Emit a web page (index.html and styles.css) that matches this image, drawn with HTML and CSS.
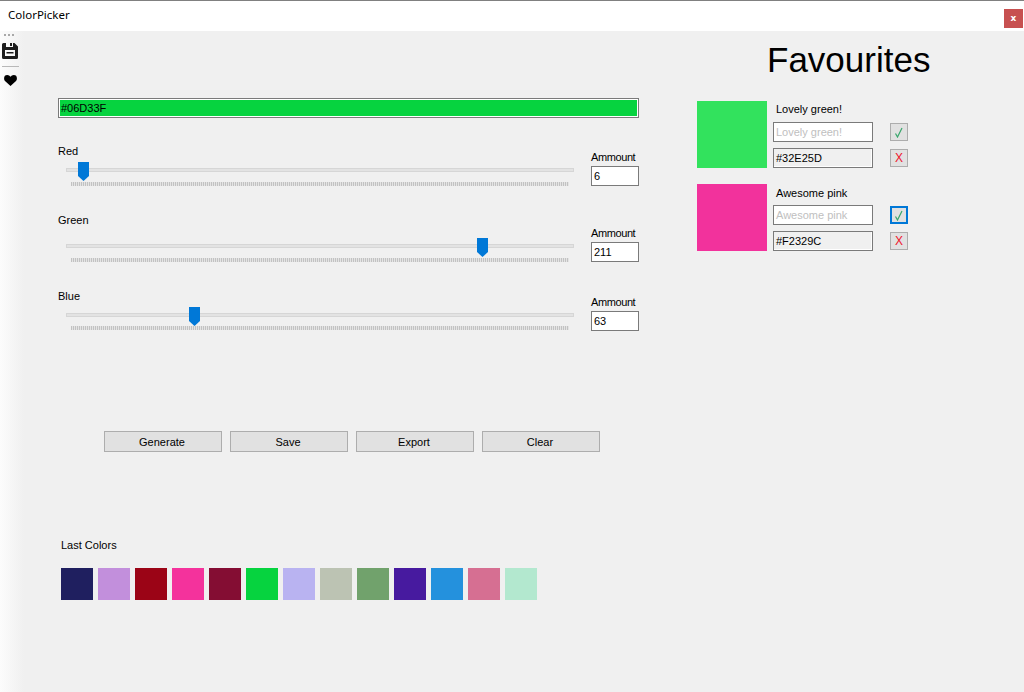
FILE: index.html
```html
<!DOCTYPE html>
<html lang="en">
<head>
<title>ColorPicker</title>
<meta charset="UTF-8">
<link rel="stylesheet" href="styles.css">
</head>
<body>
<header class="titlebar">
  <span class="title">ColorPicker</span>
  <button class="close">x</button>
</header>

<div class="app">
  <nav class="toolbar">
    <div class="grip"><i></i><i></i><i></i></div>
    <svg class="tool-save" width="16" height="16" viewBox="0 0 16 16">
      <path fill="#1c1c1c" fill-rule="evenodd" d="M1.500 0H12.500L16 3.500V14.500Q16 16 14.500 16H1.500Q0 16 0 14.500V1.500Q0 0 1.500 0ZM4 0V4H11V0ZM3 7V13H13V7ZM4.500 9H11.500V10.500H4.500Z"/>
      <path fill="#1c1c1c" d="M8 0H10V3H8Z"/>
    </svg>
    <hr class="tool-sep">
    <svg class="tool-heart" width="13" height="11" viewBox="0 0 14 12">
      <path fill="#000" d="M7 12L1 6.500Q0 5.500 0 3.700Q0 0 3.500 0Q5.800 0 7 2Q8.200 0 10.500 0Q14 0 14 3.700Q14 5.500 13 6.500Z"/>
    </svg>
  </nav>

  <main class="picker">
    <div class="color-bar"><span class="color-fill">#06D33F</span></div>

    <section class="slider-row row-red">
      <div class="slider">
        <label class="slider-label">Red</label>
        <div class="track"><span class="thumb" style="left: 11px"></span></div>
        <div class="ticks"></div>
      </div>
      <div class="amount">
        <label>Ammount</label>
        <div class="field amount-box">6</div>
      </div>
    </section>

    <section class="slider-row row-green">
      <div class="slider">
        <label class="slider-label">Green</label>
        <div class="track"><span class="thumb" style="left: 410px"></span></div>
        <div class="ticks"></div>
      </div>
      <div class="amount">
        <label>Ammount</label>
        <div class="field amount-box">211</div>
      </div>
    </section>

    <section class="slider-row row-blue">
      <div class="slider">
        <label class="slider-label">Blue</label>
        <div class="track"><span class="thumb" style="left: 122px"></span></div>
        <div class="ticks"></div>
      </div>
      <div class="amount">
        <label>Ammount</label>
        <div class="field amount-box">63</div>
      </div>
    </section>

    <div class="actions">
      <button class="action">Generate</button>
      <button class="action">Save</button>
      <button class="action">Export</button>
      <button class="action">Clear</button>
    </div>

    <section class="last-colors">
      <label class="last-label">Last Colors</label>
      <div class="swatches">
        <span class="swatch c1"></span>
        <span class="swatch c2"></span>
        <span class="swatch c3"></span>
        <span class="swatch c4"></span>
        <span class="swatch c5"></span>
        <span class="swatch c6"></span>
        <span class="swatch c7"></span>
        <span class="swatch c8"></span>
        <span class="swatch c9"></span>
        <span class="swatch c10"></span>
        <span class="swatch c11"></span>
        <span class="swatch c12"></span>
        <span class="swatch c13"></span>
      </div>
    </section>
  </main>

  <aside class="favourites">
    <h1>Favourites</h1>

    <article class="fav">
      <div class="fav-color fav-green"></div>
      <div class="fav-fields">
        <label class="fav-name">Lovely green!</label>
        <div class="field fav-box placeholder">Lovely green!</div>
        <div class="field fav-box hex">#32E25D</div>
      </div>
      <div class="fav-buttons">
        <button class="mini">
          <svg width="10" height="11" viewBox="0 0 10 11"><path fill="none" stroke="#3aa76d" stroke-width="1.200" d="M1.500 6.500L3.500 10L8 1"/></svg>
        </button>
        <button class="mini del">X</button>
      </div>
    </article>

    <article class="fav">
      <div class="fav-color fav-pink"></div>
      <div class="fav-fields">
        <label class="fav-name lower">Awesome pink</label>
        <div class="field fav-box placeholder">Awesome pink</div>
        <div class="field fav-box hex">#F2329C</div>
      </div>
      <div class="fav-buttons">
        <button class="mini focused">
          <svg width="10" height="11" viewBox="0 0 10 11"><path fill="none" stroke="#3aa76d" stroke-width="1.200" d="M1.500 6.500L3.500 10L8 1"/></svg>
        </button>
        <button class="mini del">X</button>
      </div>
    </article>
  </aside>
</div>
</body>
</html>
```

FILE: styles.css
```css
* {
    box-sizing: border-box;
}
html, body {
    margin: 0;
    height: 100%;
    overflow: hidden;
}
body {
    display: flex;
    flex-direction: column;
    background-color: #f0f0f0;
    color: #000;
    font-family: "Liberation Sans", sans-serif;
    font-size: 11px;
    line-height: 16px;
}
button {
    font: inherit;
    color: inherit;
    padding: 0;
}
label {
    display: block;
}

/* title bar */
.titlebar {
    flex: none;
    display: flex;
    align-items: center;
    justify-content: space-between;
    height: 31px;
    padding: 0 1px 0 8px;
    background-color: #fff;
    border-top: 1px solid #808080;
}
.title {
    font-family: "Noto Sans", sans-serif;
    font-size: 11.5px;
    margin-top: -2px;
}
.close {
    width: 19px;
    height: 19px;
    margin-top: 4px;
    border: none;
    background-color: #c75050;
    color: #fff;
    font-family: "DejaVu Sans", sans-serif;
    font-size: 9px;
    font-weight: bold;
    line-height: 17px;
}

.app {
    flex: 1;
    display: flex;
}

/* left strip */
.toolbar {
    flex: none;
    width: 24px;
    display: flex;
    flex-direction: column;
    padding: 3px 0 0 2px;
    background: linear-gradient(to right, #fcfcfc, #f0f0f0);
}
.grip {
    display: flex;
    gap: 2px;
    height: 2px;
    margin-left: 2px;
}
.grip i {
    width: 2px;
    height: 2px;
    background-color: #a8a8a8;
}
.tool-save {
    margin-top: 7px;
}
.tool-sep {
    width: 17px;
    height: 1px;
    margin: 7px 0 0 0;
    border: none;
    background-color: #b8b8b8;
}
.tool-heart {
    margin: 8px 0 0 2px;
}

/* picker */
.picker {
    flex: none;
    width: 615px;
    padding: 67px 0 0 34px;
}
.color-bar {
    width: 581px;
    height: 20px;
    padding: 1px;
    background-color: #fff;
    border: 1px solid #7a7a7a;
}
.color-fill {
    display: block;
    height: 16px;
    padding-left: 1px;
    background-color: #06d33f;
    line-height: 16px;
}
.slider-row {
    display: flex;
    align-items: flex-end;
    justify-content: space-between;
    width: 581px;
    margin-top: 26px;
}
.row-red {
    margin-top: 25px;
}
.slider {
    width: 533px;
}
.row-blue .slider {
    margin-bottom: 1px;
}
.slider-label {
    margin-bottom: 9px;
}
.row-green .slider-label {
    margin-bottom: 16px;
}
.track {
    position: relative;
    width: 508px;
    height: 4px;
    margin-left: 8px;
    background-color: #e3e3e3;
    border: 1px solid #d6d6d6;
}
.thumb {
    position: absolute;
    top: -7px;
    width: 11px;
    height: 19px;
    background-color: #0078d7;
    clip-path: polygon(0 0, 100% 0, 100% 74%, 50% 100%, 0 74%);
}
.ticks {
    width: 498px;
    height: 4px;
    margin: 10px 0 0 13px;
    background: repeating-linear-gradient(to right, #c2c2c2 0, #c2c2c2 1px, #e4e4e4 1px, #e4e4e4 2px);
}
.row-blue .ticks {
    margin-top: 9px;
}
.amount {
    width: 48px;
}
.amount label {
    margin-bottom: 1px;
    letter-spacing: -0.4px;
}
.field {
    height: 20px;
    padding-left: 2px;
    background-color: #fff;
    border: 1px solid #7a7a7a;
    line-height: 18px;
}
.actions {
    display: flex;
    gap: 8px;
    margin: 100px 0 0 46px;
}
.action {
    width: 118px;
    height: 21px;
    padding-right: 2px;
    background-color: #e1e1e1;
    border: 1px solid #adadad;
}
.last-colors {
    margin: 85px 0 0 3px;
}
.swatches {
    display: flex;
    gap: 5px;
    margin-top: 15px;
}
.swatch {
    width: 32px;
    height: 32px;
}
.c1 { background-color: #1f1f5f; }
.c2 { background-color: #c28fdc; }
.c3 { background-color: #9b0416; }
.c4 { background-color: #f4329c; }
.c5 { background-color: #840d33; }
.c6 { background-color: #06d33f; }
.c7 { background-color: #b9b3f1; }
.c8 { background-color: #bcc3b3; }
.c9 { background-color: #71a26c; }
.c10 { background-color: #471a9f; }
.c11 { background-color: #2491dd; }
.c12 { background-color: #d66f92; }
.c13 { background-color: #b3e8cf; }

/* favourites */
.favourites {
    flex: none;
    width: 300px;
    padding: 9px 0 0 58px;
}
h1 {
    margin: 0 0 21px 70px;
    font-size: 35px;
    font-weight: normal;
    line-height: 40px;
}
.fav {
    display: flex;
    height: 67px;
    margin-bottom: 16px;
}
.fav-color {
    width: 70px;
    height: 67px;
}
.fav-green {
    background-color: #32e25d;
}
.fav-pink {
    background-color: #f2329c;
}
.fav-fields {
    width: 100px;
    margin-left: 6px;
}
.fav-name {
    padding-left: 3px;
    margin-bottom: 5px;
}
.fav-name.lower {
    margin-top: 1px;
    margin-bottom: 4px;
}
.fav-box {
    margin-bottom: 6px;
}
.placeholder {
    color: #c0c0c0;
}
.hex {
    background-color: #f0f0f0;
    box-shadow: inset -1px -1px 0 #fff;
}
.fav-buttons {
    display: flex;
    flex-direction: column;
    gap: 8px;
    margin: 22px 0 0 17px;
}
.mini {
    display: flex;
    align-items: center;
    justify-content: center;
    width: 18px;
    height: 18px;
    background-color: #e1e1e1;
    border: 1px solid #adadad;
}
.focused {
    border: 2px solid #0078d7;
}
.del {
    color: #f0142c;
    font-size: 12px;
}
```
